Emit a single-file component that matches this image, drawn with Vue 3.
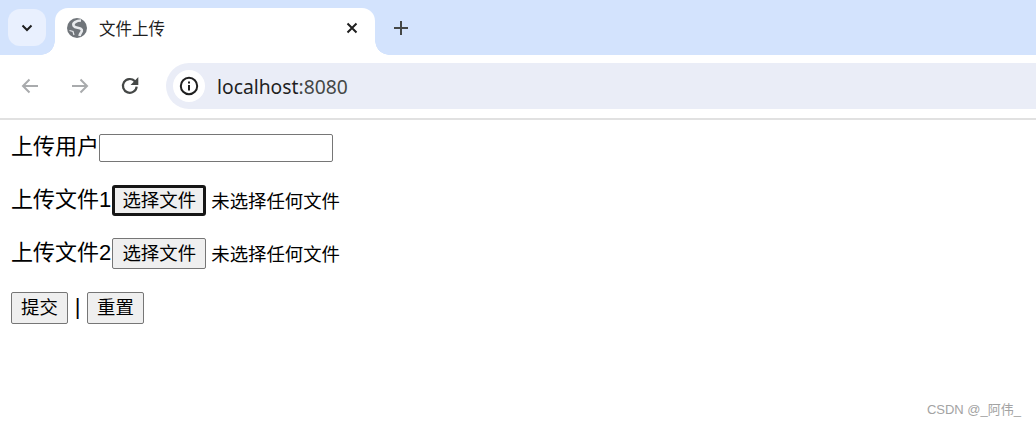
<template>
  <div class="page">
    <div class="tabstrip">
      <button class="tab-menu">
        <svg width="12" height="8" viewBox="0 0 12 8"><path d="M1.500 1.500 6 6l4.500-4.500" fill="none" stroke="#1f1f1f" stroke-width="2"/></svg>
      </button>
      <div class="tab">
        <svg class="globe" width="20" height="20" viewBox="0 0 20 20">
          <circle cx="10" cy="10" r="10" fill="#70757a"/>
          <path d="M14 2.500C9.500 2.500 5 5 6.800 8 8.500 10.500 13.500 8.800 14.800 11.800 15.500 14 12.800 15 12.500 18" fill="none" stroke="#e8eaed" stroke-width="2.600"/>
          <path d="M2.500 12.500 6 13.500 7 17" fill="none" stroke="#e8eaed" stroke-width="1.200"/>
        </svg>
        <span class="tab-title">文件上传</span>
        <svg class="tab-close" width="12" height="12" viewBox="0 0 12 12"><path d="M1.500 1.500l9 9m0-9-9 9" stroke="#1f1f1f" stroke-width="2" fill="none"/></svg>
      </div>
      <svg class="plus" width="14" height="14" viewBox="0 0 14 14"><path d="M7 0v14M0 7h14" stroke="#444746" stroke-width="2" fill="none"/></svg>
    </div>
    <div class="toolbar">
      <svg class="nav" width="18" height="16" viewBox="0 0 18 16"><path d="M17 8H2m6.500-6.500L2 8l6.500 6.500" fill="none" stroke="#a9abad" stroke-width="2"/></svg>
      <svg class="nav" width="18" height="16" viewBox="0 0 18 16"><path d="M1 8h15M9.500 1.500 16 8l-6.500 6.500" fill="none" stroke="#a9abad" stroke-width="2"/></svg>
      <svg class="nav reload" width="20" height="20" viewBox="0 0 18 18"><path d="M15 9.500A6.200 6.200 0 1 1 13.300 4.600L15.500 7" fill="none" stroke="#444746" stroke-width="2"/><path d="M16.500 1v7h-7z" fill="#444746"/></svg>
      <div class="omnibox">
        <div class="site-info">
          <svg width="20" height="20" viewBox="0 0 20 20"><circle cx="10" cy="10" r="8.200" fill="none" stroke="#1f1f1f" stroke-width="2"/><path d="M9 9h2v5.500H9zM9 5.500h2v2H9z" fill="#1f1f1f"/></svg>
        </div>
        <span class="url">localhost<span class="port">:8080</span></span>
      </div>
    </div>
    <form class="content" @submit.prevent>
      <div class="row row-user">
        <label>上传用户</label>
        <input class="text" type="text" />
      </div>
      <div class="row row-file">
        <label>上传文件1</label>
        <button class="btn pick focused" type="button">选择文件</button>
        <span class="none">未选择任何文件</span>
      </div>
      <div class="row row-file">
        <label>上传文件2</label>
        <button class="btn pick" type="button">选择文件</button>
        <span class="none">未选择任何文件</span>
      </div>
      <div class="row row-actions">
        <button class="btn action" type="submit">提交</button>
        <span class="sep">|</span>
        <button class="btn action" type="reset">重置</button>
      </div>
    </form>
    <div class="watermark">CSDN @_阿伟_</div>
  </div>
</template>

<script setup>
</script>

<style>
html,
body {
  margin: 0;
  background: #fff;
}
</style>

<style scoped>
.page {
  position: relative;
  width: 1036px;
  height: 426px;
  overflow: hidden;
  font-family: "Liberation Sans", "Noto Sans CJK SC", sans-serif;
  color: #000;
}

.tabstrip {
  display: flex;
  align-items: flex-start;
  height: 55px;
  background: #d3e3fd;
  box-sizing: border-box;
  padding-top: 8px;
}

.tab-menu {
  display: flex;
  align-items: center;
  justify-content: center;
  width: 38px;
  height: 37px;
  margin: 1px 9px 0 8px;
  padding: 0;
  border: 0;
  border-radius: 12px;
  background: #e9f0fe;
}

.tab {
  position: relative;
  display: flex;
  align-items: center;
  width: 320px;
  height: 47px;
  box-sizing: border-box;
  padding: 0 17px 7px 12px;
  background: #fff;
  border-radius: 13px 13px 0 0;
}

.tab::before,
.tab::after {
  content: "";
  position: absolute;
  bottom: 0;
  width: 14px;
  height: 14px;
}

.tab::before {
  left: -14px;
  background: radial-gradient(circle at 0 0, transparent 13.500px, #fff 14px);
}

.tab::after {
  right: -14px;
  background: radial-gradient(circle at 100% 0, transparent 13.500px, #fff 14px);
}

.tab-title {
  flex: 1;
  margin-left: 12px;
  font-size: 16.500px;
  color: #1f1f1f;
}

.plus {
  margin: 13px 0 0 19px;
}

.toolbar {
  display: flex;
  align-items: center;
  height: 65px;
  box-sizing: border-box;
  padding: 0 0 1px 21px;
  background: #fff;
  border-top-left-radius: 12px;
  border-bottom: 2px solid #e1e1e1;
}

.nav {
  flex: none;
  margin-right: 32px;
}

.reload {
  margin-left: -1px;
  margin-right: 26px;
}

.omnibox {
  flex: 1;
  display: flex;
  align-items: center;
  height: 46px;
  padding-left: 7px;
  background: #eaedf7;
  border-radius: 23px 0 0 23px;
}

.site-info {
  display: flex;
  align-items: center;
  justify-content: center;
  width: 32px;
  height: 32px;
  border-radius: 50%;
  background: #fff;
}

.url {
  margin-left: 12px;
  font-family: "Noto Sans", sans-serif;
  font-size: 19.300px;
  color: #1f1f1f;
}

.port {
  color: #444746;
}

.content {
  display: flex;
  flex-direction: column;
  padding: 14px 0 0 11px;
}

.row {
  display: flex;
  align-items: center;
}

.row label {
  padding-bottom: 2px;
  font-size: 22px;
  line-height: 28px;
}

.row-user {
  height: 28px;
  margin-bottom: 23px;
}

.row-file {
  height: 31px;
  margin-bottom: 22px;
}

.row-file + .row-file {
  margin-bottom: 23px;
}

.row-actions {
  height: 32px;
}

.text {
  width: 234px;
  height: 28px;
  box-sizing: border-box;
  margin: 0;
  padding: 1px 2px;
  border: 1px solid #767676;
  border-radius: 2px;
  background: #fff;
}

.btn {
  box-sizing: border-box;
  padding: 0;
  border: 1px solid #767676;
  border-radius: 2px;
  background: #efefef;
  color: #000;
  font-family: "Liberation Sans", "Noto Sans CJK SC", sans-serif;
  font-size: 18.400px;
  line-height: 24px;
}

.pick {
  width: 94px;
  height: 31px;
  margin-left: 1px;
}

.focused {
  border: 3px solid #161616;
  border-radius: 3px;
}

.none {
  margin-left: 5px;
  padding-bottom: 2px;
  font-size: 18.400px;
}

.action {
  width: 57px;
  height: 32px;
}

.sep {
  width: 19px;
  padding-bottom: 2px;
  text-align: center;
  font-size: 22px;
  line-height: 30px;
}

.watermark {
  position: absolute;
  right: 15px;
  bottom: 8px;
  font-size: 13px;
  line-height: 16px;
  color: #a3a3a3;
}
</style>
